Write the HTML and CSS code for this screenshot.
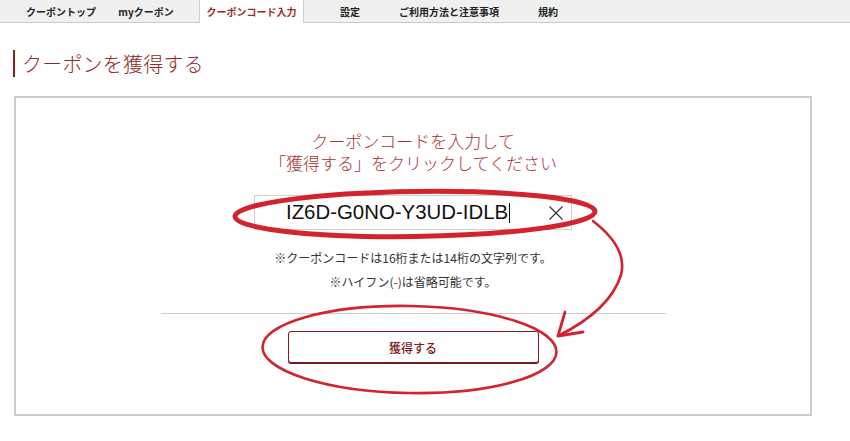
FILE: index.html
```html
<!DOCTYPE html>
<html lang="ja">
<head>
<meta charset="utf-8">
<title>クーポンを獲得する</title>
<link rel="stylesheet" href="styles.css">
</head>
<body>
<nav class="tabs">
  <a class="tab tab--top">クーポントップ</a>
  <a class="tab tab--my">myクーポン</a>
  <a class="tab tab--active">クーポンコード入力</a>
  <a class="tab tab--set">設定</a>
  <a class="tab tab--howto">ご利用方法と注意事項</a>
  <a class="tab tab--terms">規約</a>
</nav>
<h1 class="page-title">クーポンを獲得する</h1>
<section class="card">
  <p class="lead"><span class="lead-line">クーポンコードを入力して</span><span class="lead-line">「獲得する」をクリックしてください</span></p>
  <div class="code-field">
    <span class="code-value">IZ6D-G0NO-Y3UD-IDLB<span class="caret"></span></span>
    <svg class="clear" width="16" height="16" viewBox="0 0 16 16"><path d="M1.5 1.5 L14.5 14.5 M14.5 1.5 L1.5 14.5" stroke="#3a3a3a" stroke-width="1.3" fill="none"/></svg>
  </div>
  <p class="note">※クーポンコードは16桁または14桁の文字列です。</p>
  <p class="note">※ハイフン(-)は省略可能です。</p>
  <hr class="sep">
  <button class="get-btn">獲得する</button>
</section>
<svg class="marks" width="850" height="441" viewBox="0 0 850 441">
  <g fill="none" stroke="#d2232f" stroke-linecap="round" stroke-linejoin="round">
    <ellipse cx="415" cy="214" rx="180" ry="22.5" stroke-width="5" transform="rotate(-0.8 415 214)"/>
    <ellipse cx="409.5" cy="349.5" rx="147" ry="43.5" stroke-width="2.6" transform="rotate(1 409.5 349.5)"/>
    <path d="M593 221 Q628 248 621 275 Q610 310 558 336" stroke-width="2.6"/>
    <path d="M565 312 L558 336 L583 332" stroke-width="2.8"/>
  </g>
</svg>
</body>
</html>
```
FILE: styles.css
```css
html, body {
  margin: 0;
  padding: 0;
  background: #ffffff;
}
body {
  width: 850px;
  height: 441px;
  overflow: hidden;
  position: relative;
  font-family: "Noto Sans CJK JP", "Noto Sans", sans-serif;
  color: #333333;
}
.tabs {
  display: flex;
  height: 22px;
  background: #f0f0f0;
  border-bottom: 1px solid #c9c9c9;
  padding-left: 12px;
}
.tab {
  display: flex;
  align-items: center;
  justify-content: center;
  height: 22px;
  font-size: 10px;
  font-weight: bold;
  color: #222222;
  box-sizing: border-box;
  white-space: nowrap;
}
.tab--top { width: 98px; }
.tab--my { width: 72px; margin-right: 17px; }
.tab--active {
  width: 105px;
  height: 23px;
  background: #ffffff;
  border-left: 1px solid #cfcfcf;
  border-right: 1px solid #cfcfcf;
  color: #9b2a2a;
}
.tab--set { width: 92px; }
.tab--howto { width: 106px; }
.tab--terms { width: 92px; }

.page-title {
  margin: 27px 0 0 13px;
  padding-left: 7px;
  border-left: 2px solid #8b1d1d;
  height: 27px;
  line-height: 27px;
  font-size: 20px;
  font-weight: 300;
  color: #8e2a2a;
  letter-spacing: 0.2px;
}
.card {
  margin: 19px 0 0 14px;
  width: 798px;
  height: 320px;
  box-sizing: border-box;
  border: 2px solid #cccccc;
  padding-top: 32px;
  display: flex;
  flex-direction: column;
  align-items: center;
}
.lead {
  margin: 0;
  display: flex;
  flex-direction: column;
  align-items: center;
  font-size: 17px;
  color: #a23535;
  font-weight: 300;
}
.lead-line {
  display: block;
  height: 22px;
  line-height: 22px;
}
.code-field {
  margin-top: 21px;
  width: 318px;
  height: 35px;
  box-sizing: border-box;
  border: 1px solid #d0d0d0;
  display: flex;
  align-items: center;
  padding-left: 31px;
  position: relative;
}
.code-value {
  font-family: "Liberation Sans", Arial, sans-serif;
  font-size: 20.4px;
  color: #111111;
  display: flex;
  align-items: center;
}
.caret {
  display: inline-block;
  width: 1px;
  height: 20px;
  background: #111111;
  margin-left: 1px;
}
.clear {
  margin-left: auto;
  margin-right: 7px;
}
.note {
  margin: 0;
  font-size: 12px;
  line-height: 24px;
  color: #333333;
}
.code-field + .note {
  margin-top: 16px;
}
.sep {
  margin: 19px 0 0;
  width: 505px;
  border: 0;
  border-top: 1px solid #cccccc;
  height: 0;
}
.get-btn {
  margin-top: 17px;
  width: 251px;
  height: 32px;
  background: #ffffff;
  border: 1px solid #7a2020;
  border-radius: 3px;
  box-shadow: 0 1px 0 #6a1c1c;
  font-family: "Noto Sans CJK JP", sans-serif;
  font-size: 12px;
  font-weight: 500;
  color: #7a1b1b;
  padding: 0;
}
.marks {
  position: absolute;
  left: 0;
  top: 0;
  pointer-events: none;
}
```
